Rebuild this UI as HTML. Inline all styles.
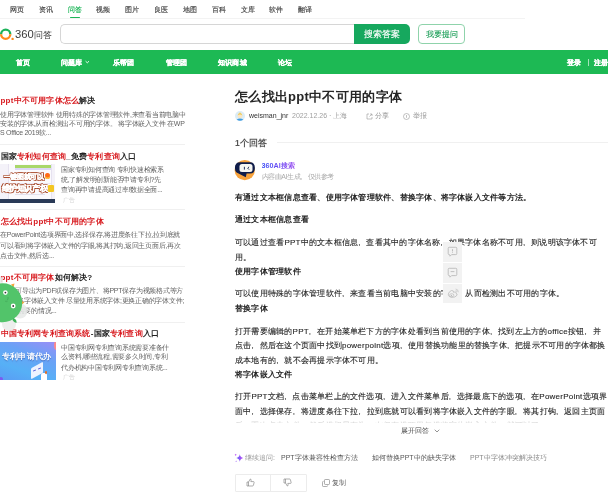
<!DOCTYPE html>
<html><head><meta charset="utf-8">
<style>
*{margin:0;padding:0;box-sizing:border-box}
html,body{width:608px;height:500px;overflow:hidden;background:#fff}
body{position:relative;-webkit-font-smoothing:antialiased;will-change:transform;font-family:"Liberation Sans",sans-serif;color:#333}
.a{position:absolute;white-space:nowrap}
.tab{position:absolute;white-space:nowrap;top:4.5px;font-size:7px;line-height:10px;color:#444;-webkit-text-stroke:.15px currentColor}
.nav{position:absolute;white-space:nowrap;top:58px;font-size:7px;letter-spacing:.2px;line-height:10px;color:#fff;font-weight:bold;-webkit-text-stroke:.25px #fff}
.st{position:absolute;left:.5px;font-size:8px;letter-spacing:.2px;line-height:12px;font-weight:bold;color:#222;white-space:nowrap}
.st i{font-style:normal;color:#d81a1f}
.sd{position:absolute;font-size:7px;letter-spacing:-.25px;line-height:10px;color:#626262;white-space:nowrap}
.sep{position:absolute;left:0;width:185px;height:1px;background:#f0f0f0}
.ln{position:absolute;left:235px;margin-top:1px;font-size:8px;letter-spacing:.23px;line-height:14px;color:#222;white-space:nowrap}
.ln:not(.b){-webkit-text-stroke:.1px #222}
.b{font-weight:bold;color:#222}
.c{display:inline-block;width:1.03em;font-style:normal}
</style></head><body>

<!-- top tabs -->
<div class="tab" style="left:10px">网页</div>
<div class="tab" style="left:39px">资讯</div>
<div class="tab" style="left:68px;color:#1bb557">问答</div>
<div class="tab" style="left:96px">视频</div>
<div class="tab" style="left:125px">图片</div>
<div class="tab" style="left:154px">良医</div>
<div class="tab" style="left:183px">地图</div>
<div class="tab" style="left:212px">百科</div>
<div class="tab" style="left:240.5px">文库</div>
<div class="tab" style="left:269px">软件</div>
<div class="tab" style="left:298px">翻译</div>
<div class="a" style="left:0;top:18px;width:525px;height:1px;background:#f3f3f3"></div>
<div class="a" style="left:70px;top:16.5px;width:9.5px;height:1.6px;background:#1bb557;border-radius:1px"></div>

<!-- logo -->
<svg class="a" style="left:0;top:28px" width="15" height="13" viewBox="0 0 15 13"><path d="M1.1 6.2 A4.6 4.6 0 0 1 10.3 6.2" stroke="#1cb35a" stroke-width="2.3" fill="none"/><path d="M10.3 6.2 A4.6 4.6 0 0 1 1.1 6.2" stroke="#ff8a1c" stroke-width="2.3" fill="none"/><circle cx="12.6" cy="10.9" r="1.2" fill="#ff8a1c"/></svg>
<div class="a" style="left:15px;top:29px;font-size:10px;line-height:12px;color:#3a3a3a"><span style="display:inline-block;transform:scaleX(1.12);transform-origin:0 0;margin-right:2.6px">360</span><span style="font-size:9px;letter-spacing:-.3px;position:relative;top:.3px">问答</span></div>

<!-- search -->
<div class="a" style="left:59.5px;top:23.8px;width:298px;height:20.6px;border:1.2px solid #d6d6d6;border-radius:5px 0 0 5px;border-right:none"></div>
<div class="a" style="left:354px;top:23.8px;width:55.5px;height:20.6px;background:#16a85e;border-radius:0 5px 5px 0;color:#fff;font-size:9px;line-height:20.5px;text-align:center;-webkit-text-stroke:.15px #fff">搜索答案</div>
<div class="a" style="left:418px;top:24px;width:47px;height:20px;border:1px solid #8fd3ab;border-radius:4px;color:#169c54;font-size:8px;line-height:19.5px;text-align:center;-webkit-text-stroke:.1px #169c54">我要提问</div>

<!-- green nav -->
<div class="a" style="left:0;top:50px;width:608px;height:23.5px;background:#1db954"></div>
<div class="nav" style="left:16px">首页</div>
<div class="nav" style="left:60.5px">问题库</div>
<svg class="a" style="left:85px;top:60px" width="5" height="4" viewBox="0 0 5 4"><path d="M.6 1.2 L2.3 2.8 L4 1.2" stroke="#fff" stroke-width=".9" fill="none"/></svg>
<div class="nav" style="left:113px">乐帮团</div>
<div class="nav" style="left:165.5px">管理团</div>
<div class="nav" style="left:218px">知识商城</div>
<div class="nav" style="left:278px">论坛</div>
<div class="nav" style="left:566.5px">登录</div>
<div class="a" style="left:587.5px;top:58.5px;width:0.6px;height:7px;background:rgba(255,255,255,.6)"></div>
<div class="nav" style="left:594px">注册</div>

<!-- sidebar -->
<div class="st" style="top:94.5px"><i>ppt中不可用字体怎么</i>解决</div>
<div class="sd" style="left:0;top:109.7px">使用字体管理软件 使用特殊的字体管理软件,来查看当前电脑中</div>
<div class="sd" style="left:0;top:119px">安装的字体,从而检测出不可用的字体。 将字体嵌入文件 在WP</div>
<div class="sd" style="left:0;top:128.4px">S Office 2019软...</div>
<div class="sep" style="top:143.5px"></div>

<div class="st" style="top:150.5px">国家<i>专利知何查询</i>_免费<i>专利查询</i>入口</div>
<div class="a" style="left:0;top:164px;width:55px;height:38.5px;background:#f4f2f9;overflow:hidden">
  <div class="a" style="left:7.5px;top:0;width:44.5px;height:35px;background:#fbfafd;border-left:.6px solid #e6e2f0;border-right:.6px solid #e6e2f0"></div>
  <div class="a" style="left:14.5px;top:1px;width:36.5px;height:2.6px;background:#a9d86a"></div>
  <div class="a" style="left:14.5px;top:3.8px;width:36.5px;height:2.6px;background:#dcd8f6"></div>
  <div class="a" style="left:15px;top:19px;width:36px;height:.5px;background:#ebe8f3"></div>
  <div class="a" style="left:15px;top:29.5px;width:30px;height:.5px;background:#e4e1ee"></div>
  <div class="a" style="left:0;top:35px;width:55px;height:3.5px;background:#2a3a57"></div>
  <div class="a" style="left:3.5px;top:9px;font-size:7px;letter-spacing:-.3px;line-height:7px;font-weight:bold;color:#fff;-webkit-text-stroke:.45px #fff;text-shadow:.7px .7px 0 #a84a2c,-.7px -.7px 0 #a84a2c,.7px -.7px 0 #a84a2c,-.7px .7px 0 #a84a2c,0 .8px 0 #a84a2c,0 -.8px 0 #a84a2c,.8px 0 0 #a84a2c,-.8px 0 0 #a84a2c">一键图就可以</div>
  <div class="a" style="left:1.5px;top:20.5px;font-size:8px;letter-spacing:-.4px;line-height:8px;font-weight:bold;color:#fff;-webkit-text-stroke:.45px #fff;text-shadow:.7px .7px 0 #a84a2c,-.7px -.7px 0 #a84a2c,.7px -.7px 0 #a84a2c,-.7px .7px 0 #a84a2c,0 .8px 0 #a84a2c,0 -.8px 0 #a84a2c,.8px 0 0 #a84a2c,-.8px 0 0 #a84a2c">维护知识产权</div>
  <div class="a" style="left:45px;top:9px;width:4.5px;height:5.5px;border-radius:50% 50% 45% 45%;background:#ff6a1a;box-shadow:inset 0 -1.5px 0 #ffc23a"></div>
  <div class="a" style="left:48px;top:21px;width:5.5px;height:6.5px;border-radius:1px;background:#f3c623"></div>
</div>
<div class="sd" style="left:61px;top:164.5px">国家专利知何查询 专利快速检索系</div>
<div class="sd" style="left:61px;top:174.5px">统,了解发明创新能否申请专利?先</div>
<div class="sd" style="left:61px;top:185px">查询再申请提高通过率!数据全面...</div>
<div class="a" style="left:63px;top:195.5px;font-size:6px;line-height:8px;color:#d5d5d5">广告</div>
<div class="sep" style="top:209px"></div>

<div class="st" style="top:215.5px"><i>怎么找出ppt中不可用的字体</i></div>
<div class="sd" style="left:0;top:230px">在PowerPoint选项界面中,选择保存,将进度条往下拉,拉到底就</div>
<div class="sd" style="left:0;top:240.5px">可以看到将字体嵌入文件的字眼,将其打钩,返回主页面后,再次</div>
<div class="sd" style="left:0;top:251px">点击文件,然后选...</div>
<div class="sep" style="top:265.5px"></div>

<div class="st" style="top:272px"><i>ppt不可用字体</i>如何解决?</div>
<div class="sd" style="left:0;top:285.5px">方法:可导出为PDF或保存为图片、将PPT保存为视频格式等方</div>
<div class="sd" style="left:0;top:296px"><span style="position:absolute;left:17px">将字体嵌入文件 尽量使用系统字体;更换正确的字体文件;</span></div>
<div class="sd" style="left:17.5px;top:306px">需要的情况...</div>
<div class="sep" style="top:321.5px"></div>

<div class="st" style="top:328.3px"><i>中国专利网专利查询系统</i>-国家<i>专利查询</i>入口</div>
<div class="a" style="left:0;top:342px;width:55.5px;height:37.5px;background:linear-gradient(200deg,#9b8ef6 0%,#6aa2f6 35%,#56b0f6 70%,#5a9cf4 100%);overflow:hidden">
  <div class="a" style="left:1.5px;top:9.5px;font-size:8px;letter-spacing:.4px;line-height:10px;color:#fff;font-weight:bold;text-shadow:0 .5px 1px rgba(40,60,140,.5)">专利申请代办</div>
  <div class="a" style="left:31px;top:23px;width:12px;height:11px;background:#eef3ff;transform:skewY(-28deg);border-radius:1px"></div>
  <div class="a" style="left:33px;top:28px;width:3px;height:1px;background:#4f55d8;transform:rotate(-25deg)"></div>
  <div class="a" style="left:38px;top:25.5px;width:3px;height:1px;background:#4f55d8;transform:rotate(-25deg)"></div>
  <div class="a" style="left:41px;top:31px;width:6px;height:6.5px;background:#fff;border-radius:2px 2px 0 0"></div>
  <div class="a" style="left:44.5px;top:29px;width:2.5px;height:2.5px;border-radius:50%;background:#e0702a"></div>
  <div class="a" style="left:53.5px;top:-1px;width:5px;height:9px;border-radius:50%;background:#ff8a8a"></div>
  <div class="a" style="left:-1px;top:35px;width:4px;height:4px;border-radius:50%;background:#7a5cf0"></div>
</div>
<div class="sd" style="left:61px;top:342.5px">中国专利网专利查询系统需要准备什</div>
<div class="sd" style="left:61px;top:352px">么资料,哪些流程,需要多久时间,专利</div>
<div class="sd" style="left:61px;top:362.5px">代办机构中国专利网专利查询系统...</div>
<div class="a" style="left:63px;top:373px;font-size:6px;line-height:8px;color:#d5d5d5">广告</div>

<!-- mascot -->
<svg class="a" style="left:-20px;top:268px" width="60" height="72" viewBox="-20 268 60 72">
  <circle cx="-3" cy="281" r="6" fill="#e9ecea" opacity=".9"/>
  <circle cx="20" cy="311" r="7.5" fill="#e6e9e7" opacity=".85"/>
  <circle cx="9" cy="324" r="7" fill="#eceeec"/>
  <path d="M11 284.5 L14.5 283.5 L13.5 287.5 Z" fill="#f7a43a"/>
  <path d="M21 300.5 L24.5 302.5 L21 305 Z" fill="#f7a43a"/>
  <circle cx="2.7" cy="302.7" r="19.5" fill="#52c46a"/>
  <path d="M13 318 Q17 319 16.5 323 Q14 323 12.5 320 Z" fill="#3fb45a"/>
  <circle cx="5.4" cy="292.6" r="2.3" fill="#fff"/><circle cx="5.4" cy="292.6" r=".9" fill="#333"/>
  <circle cx="13.2" cy="306" r="2.4" fill="#fff"/><circle cx="13.2" cy="306" r=".9" fill="#333"/>
  <path d="M8 297 Q8.5 299 7 300.5" stroke="#3e9e55" stroke-width=".6" fill="none"/>
  <path d="M5 301 Q6 302 7.5 301.5" stroke="#3e9e55" stroke-width=".5" fill="none"/>
</svg>

<!-- main -->
<div class="a" style="left:235px;top:89px;font-size:13px;letter-spacing:.28px;line-height:16px;font-weight:bold;color:#262626">怎么找出ppt中不可用的字体</div>
<svg class="a" style="left:235px;top:110.5px" width="10" height="10" viewBox="0 0 10 10"><circle cx="5" cy="5" r="5" fill="#dcecf6"/><path d="M1.6 8.8 Q5 6 8.4 8.8 Q5 10.6 1.6 8.8Z" fill="#3f9be0"/><circle cx="5" cy="5" r="2.3" fill="#f8e6c4"/><path d="M2.6 4.6 Q3 2 5 2.1 Q7 2 7.4 4.6 Q6.5 3.3 5 3.4 Q3.5 3.3 2.6 4.6Z" fill="#f2c84a"/><path d="M4.8 1.2 L5.4 2.3" stroke="#f2c84a" stroke-width=".6"/></svg>
<div class="a" style="left:249px;top:111px;font-size:7px;line-height:10px;color:#333">weisman_jnr</div>
<div class="a" style="left:292px;top:111px;font-size:7px;line-height:10px;color:#a0a0a0">2022.12.26 · 上海</div>
<svg class="a" style="left:366px;top:112.5px" width="7" height="7" viewBox="0 0 7 7"><path d="M3 1 H1 V6 H6 V4" stroke="#999" stroke-width="0.6" fill="none"/><path d="M3.5 3.5 L6 1 M4 1 H6 V3" stroke="#999" stroke-width="0.6" fill="none"/></svg>
<div class="a" style="left:375px;top:111px;font-size:7px;line-height:10px;color:#999">分享</div>
<svg class="a" style="left:403px;top:112.5px" width="7" height="7" viewBox="0 0 7 7"><circle cx="3.5" cy="3.5" r="3" stroke="#999" stroke-width="0.6" fill="none"/><path d="M3.5 2 V4.8" stroke="#999" stroke-width="0.6"/></svg>
<div class="a" style="left:413px;top:111px;font-size:7px;line-height:10px;color:#999">举报</div>

<div class="a" style="left:235px;top:137px;font-size:8.5px;line-height:12px;font-weight:bold;color:#555">1个回答</div>
<div class="a" style="left:277px;top:142px;width:331px;height:1px;background:#f0f0f0"></div>

<svg class="a" style="left:232px;top:157px" width="26" height="26" viewBox="0 0 26 26"><circle cx="12.75" cy="13.1" r="10.2" fill="#f7a23b"/><path d="M8 5.2 H18 Q22.9 5.2 22.9 10.9 Q22.9 16.6 18 16.6 H14.6 L13.8 20.3 L4.6 15.6 Q2.9 14.2 2.9 10.9 Q2.9 5.2 8 5.2 Z" fill="#0f1d4a"/><rect x="7.5" y="7" width="13" height="8.1" rx="2.5" fill="#f6f6f2"/><path d="M12.4 9.8 V12.6" stroke="#0f1d4a" stroke-width="0.9"/><path d="M17.1 9.8 L15.7 11.2 L17.1 12.6" stroke="#0f1d4a" stroke-width="0.9" fill="none"/></svg>
<div class="a" style="left:261.5px;top:160.8px;font-size:7.2px;line-height:10px;font-weight:bold;background:linear-gradient(90deg,#3a4cf6,#9a4cf0);-webkit-background-clip:text;background-clip:text;color:transparent">360AI搜索</div>
<div class="a" style="left:261.5px;top:172.3px;font-size:7px;letter-spacing:-.4px;line-height:10px;color:#aaa">内容由AI生成<i class="c">,</i>仅供参考</div>

<div class="ln b" style="top:190px">有通过文本框信息查看、使用字体管理软件、替换字体、将字体嵌入文件等方法。</div>
<div class="ln b" style="top:212px">通过文本框信息查看</div>
<div class="ln" style="top:234.5px">可以通过查看PPT中的文本框信息<i class="c">,</i>查看其中的字体名称<i class="c">,</i>如果字体名称不可用<i class="c">,</i>则说明该字体不可</div>
<div class="ln" style="top:250px">用。</div>
<div class="ln b" style="top:263.5px">使用字体管理软件</div>
<div class="ln" style="top:285.5px">可以使用特殊的字体管理软件<i class="c">,</i>来查看当前电脑中安装的字体<i class="c">,</i>从而检测出不可用的字体。</div>
<div class="ln b" style="top:300.5px">替换字体</div>
<div class="ln" style="top:323.5px">打开需要编辑的PPT<i class="c">,</i>在开始菜单栏下方的字体处看到当前使用的字体<i class="c">,</i>找到左上方的office按钮<i class="c">,</i>并</div>
<div class="ln" style="top:338px">点击<i class="c">,</i>然后在这个页面中找到powerpoint选项<i class="c">,</i>使用替换功能里的替换字体<i class="c">,</i>把提示不可用的字体都换</div>
<div class="ln" style="top:352.5px">成本地有的<i class="c">,</i>就不会再提示字体不可用。</div>
<div class="ln b" style="top:366.5px">将字体嵌入文件</div>
<div class="ln" style="top:389px">打开PPT文档<i class="c">,</i>点击菜单栏上的文件选项<i class="c">,</i>进入文件菜单后<i class="c">,</i>选择最底下的选项<i class="c">,</i>在PowerPoint选项界</div>
<div class="ln" style="top:403.5px">面中<i class="c">,</i>选择保存<i class="c">,</i>将进度条往下拉<i class="c">,</i>拉到底就可以看到将字体嵌入文件的字眼<i class="c">,</i>将其打钩<i class="c">,</i>返回主页面</div>
<div class="ln" style="top:418px">后<i class="c">,</i>再次点击文件<i class="c">,</i>然后选择另存为<i class="c">,</i>在保存选项里勾选将字体嵌入文件<i class="c">,</i>就可以了。</div>
<div class="a" style="left:225px;top:416px;width:383px;height:7px;background:linear-gradient(rgba(255,255,255,.55),rgba(255,255,255,.85))"></div><div class="a" style="left:225px;top:423px;width:383px;height:11px;background:#fff"></div>

<!-- floating buttons -->
<div class="a" style="left:443px;top:241.8px;width:19px;height:20px;background:#f2f2f2"></div>
<div class="a" style="left:443px;top:262.8px;width:19px;height:20px;background:#f2f2f2"></div>
<div class="a" style="left:443px;top:283.8px;width:19px;height:19.5px;background:#f2f2f2"></div>
<svg class="a" style="left:443px;top:242px" width="20" height="20" viewBox="0 0 20 20"><path d="M6.2 5.3 H12.8 Q13.8 5.3 13.8 6.3 V11.6 Q13.8 12.6 12.8 12.6 H8.6 L7 14.2 L6.6 12.6 H6.2 Q5.2 12.6 5.2 11.6 V6.3 Q5.2 5.3 6.2 5.3 Z" stroke="#acacac" stroke-width=".7" fill="none"/><path d="M9.5 7.2 V9.4" stroke="#acacac" stroke-width=".8"/><circle cx="9.5" cy="10.5" r=".45" fill="#acacac"/></svg>
<svg class="a" style="left:443px;top:263px" width="20" height="20" viewBox="0 0 20 20"><path d="M6.2 5.3 H12.8 Q13.8 5.3 13.8 6.3 V11.6 Q13.8 12.6 12.8 12.6 H8.6 L7 14.2 L6.6 12.6 H6.2 Q5.2 12.6 5.2 11.6 V6.3 Q5.2 5.3 6.2 5.3 Z" stroke="#acacac" stroke-width=".7" fill="none"/><path d="M7.6 8.6 H11.4" stroke="#acacac" stroke-width=".7"/></svg>
<svg class="a" style="left:443px;top:284px" width="20" height="20" viewBox="0 0 20 20"><path d="M8.5 6.5 Q6 7.5 5.3 10 Q5 12.8 8.8 13.4 Q12.6 13.6 14 11.2 Q14.6 9.6 13 9.4 Q13.6 7.8 12 7.9 L10.6 8.4 Q11 6.4 8.5 6.5 Z" stroke="#b4b4b4" stroke-width=".7" fill="none"/><ellipse cx="8.7" cy="11.2" rx="2.2" ry="1.5" stroke="#b4b4b4" stroke-width=".6" fill="none"/><circle cx="8.5" cy="11.3" r=".6" fill="#b4b4b4"/><path d="M12.6 5 Q15.4 5.2 15.3 8.3" stroke="#b8b8b8" stroke-width=".6" fill="none"/><path d="M12.6 6.4 Q13.9 6.6 13.9 7.8" stroke="#b8b8b8" stroke-width=".6" fill="none"/></svg>

<div class="a" style="left:400.5px;top:426px;font-size:7px;line-height:10px;color:#444">展开回答</div>
<svg class="a" style="left:433.5px;top:429px" width="6" height="4" viewBox="0 0 6 4"><path d="M0.7 0.7 L3 3 L5.3 0.7" stroke="#666" stroke-width="0.7" fill="none"/></svg>

<!-- follow-up -->
<svg class="a" style="left:232px;top:450px" width="14" height="14" viewBox="232 450 14 14"><defs><linearGradient id="g1" x1="0" y1="0" x2="1" y2="0"><stop offset="0" stop-color="#5a5ef8"/><stop offset="1" stop-color="#c24cf4"/></linearGradient></defs><path d="M239.8 454.3 Q240.3 457.4 243.3 458 Q240.3 458.6 239.8 461.7 Q239.3 458.6 236.3 458 Q239.3 457.4 239.8 454.3 Z" fill="url(#g1)"/><path d="M235.7 453.7 Q235.9 454.6 236.8 454.8 Q235.9 455 235.7 455.9 Q235.5 455 234.6 454.8 Q235.5 454.6 235.7 453.7Z" fill="#b84cf5"/><path d="M236.1 460.4 Q236.25 461.05 236.9 461.2 Q236.25 461.35 236.1 462 Q235.95 461.35 235.3 461.2 Q235.95 461.05 236.1 460.4Z" fill="#9a5cf5"/></svg>
<div class="a" style="left:245px;top:453px;font-size:7px;line-height:10px;color:#999">继续追问<i class="c" style="width:1em">:</i></div>
<div class="a" style="left:281px;top:453px;font-size:7px;line-height:10px;color:#555">PPT字体兼容性检查方法</div>
<div class="a" style="left:372px;top:453px;font-size:7px;line-height:10px;color:#555">如何替换PPT中的缺失字体</div>
<div class="a" style="left:470px;top:453px;font-size:7px;line-height:10px;color:#888">PPT中字体冲突解决技巧</div>

<div class="a" style="left:234.5px;top:474px;width:72.5px;height:17.5px;border:1px solid #ececec;border-radius:1px"></div>
<div class="a" style="left:270.3px;top:474.5px;width:1px;height:16.5px;background:#ececec"></div>
<svg class="a" style="left:246px;top:478px" width="9" height="9" viewBox="0 0 9 9"><path d="M1 4 H2.5 V8 H1 Z M2.5 4 L4.3 1 Q5.3 1 5.1 2.3 L4.8 3.6 H7.6 Q8.3 3.7 8.1 4.5 L7.4 7.4 Q7.2 8 6.5 8 H2.5" stroke="#777" stroke-width="0.6" fill="none"/></svg>
<svg class="a" style="left:283px;top:478px" width="9" height="9" viewBox="0 0 9 9"><g transform="translate(0,9) scale(1,-1)"><path d="M1 4 H2.5 V8 H1 Z M2.5 4 L4.3 1 Q5.3 1 5.1 2.3 L4.8 3.6 H7.6 Q8.3 3.7 8.1 4.5 L7.4 7.4 Q7.2 8 6.5 8 H2.5" stroke="#777" stroke-width="0.6" fill="none"/></g></svg>
<svg class="a" style="left:322px;top:479px" width="8" height="8" viewBox="0 0 8 8"><rect x="2.5" y="0.5" width="5" height="5" rx="0.8" stroke="#777" stroke-width="0.6" fill="none"/><path d="M1.5 2.3 Q0.5 2.3 0.5 3.3 V6.7 Q0.5 7.5 1.3 7.5 H4.7 Q5.6 7.5 5.6 6.5" stroke="#777" stroke-width="0.6" fill="none"/></svg>
<div class="a" style="left:332px;top:478px;font-size:7px;line-height:10px;color:#666">复制</div>

</body></html>
